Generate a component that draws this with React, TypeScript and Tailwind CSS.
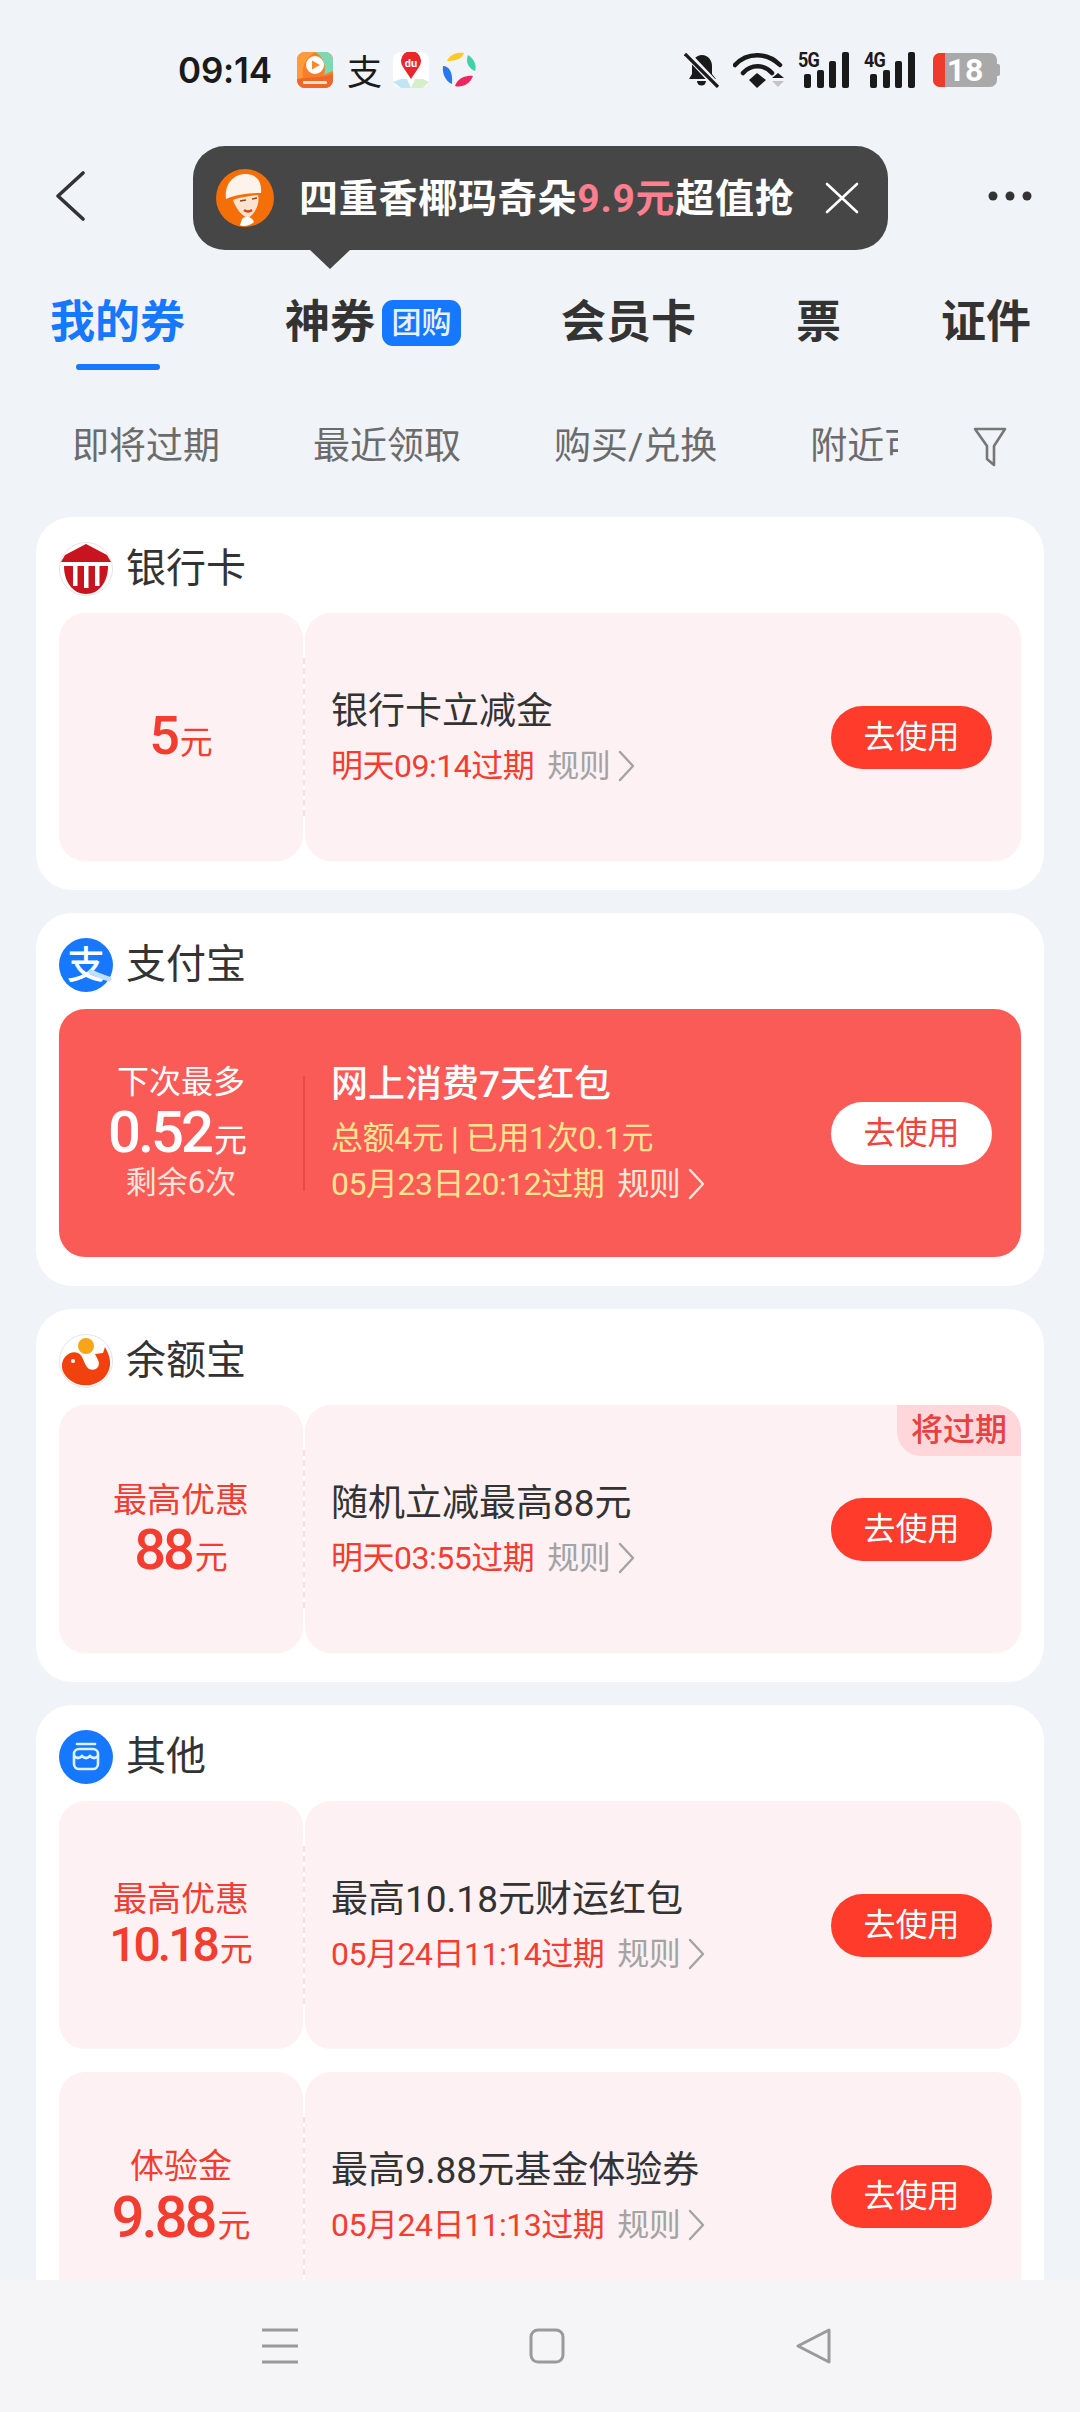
import React from "react";

const Chev = ({ c = "#a3a3a3" }: { c?: string }) => (
  <svg width="18" height="32" viewBox="0 0 18 32" fill="none" stroke={c} strokeWidth="2.4" strokeLinecap="round" strokeLinejoin="round">
    <path d="M2 2 L15 16 L2 30" />
  </svg>
);

const Bars = ({ label }: { label: string }) => (
  <div className="relative w-[52px] h-[36px]">
    <span className="absolute left-0 -top-[3px] text-[20px] leading-[22px] font-bold text-[#1a1a1a] [font-family:Roboto,sans-serif] tracking-[-1px] scale-x-90 origin-left">{label}</span>
    <svg className="absolute left-0 top-0" width="52" height="36" viewBox="0 0 52 36" fill="#1a1a1a">
      <rect x="6" y="22" width="7" height="14" rx="2" />
      <rect x="19" y="18" width="7" height="18" rx="2" />
      <rect x="31" y="9" width="7" height="27" rx="2" />
      <rect x="44" y="0" width="7" height="36" rx="2" />
    </svg>
  </div>
);

const StatusBar = () => (
  <div className="flex items-center h-[36px] mt-[52px] ml-[178px] mr-[80px]">
    <span className="text-[35px] leading-[36px] font-semibold text-[#1a1a1a] [font-family:Inter,sans-serif] w-[95px] whitespace-nowrap tracking-[-0.2px]">09:14</span>
    <svg className="ml-[24px]" width="36" height="36" viewBox="0 0 36 36">
      <rect width="36" height="36" rx="8" fill="#f57f2a" />
      <path d="M0 8 a8 8 0 0 1 8 -8 H18 C8 6 4 16 6 26 L0 28Z" fill="#fb9c3c" />
      <path d="M18 0 H28 a8 8 0 0 1 8 8 V19 C32 20 30 22 27 23 C30 14 26 4 18 0Z" fill="#7ed8b5" />
      <circle cx="18" cy="13" r="9" fill="#fff" />
      <path d="M15 8.5 L23 13 L15 17.5Z" fill="#f58a2e" />
      <path d="M0 27 C12 24 24 27 36 22 V28 a8 8 0 0 1 -8 8 H8 a8 8 0 0 1 -8 -8Z" fill="#f0662a" />
      <rect x="6" y="29" width="24" height="3" rx="1" fill="#ffe2c6" />
    </svg>
    <span className="ml-[14px] w-[35px] text-[35px] leading-[36px] text-[#1a1a1a] [font-family:'Noto_Sans_CJK_SC',sans-serif]">支</span>
    <svg className="ml-[11px]" width="36" height="36" viewBox="0 0 36 36">
      <rect width="36" height="36" rx="8" fill="#fff" />
      <path d="M0 30 L8 27 H14 L18 36 H8 Z" fill="#bfe6f2" />
      <path d="M22 27 H30 L36 30 L30 36 H18Z" fill="#d6efc9" />
      <path d="M18 27 L10 15 A10 10 0 1 1 26 15Z" fill="#e8262d" />
      <text x="18" y="15" fontSize="11" fontWeight="700" fill="#fff" textAnchor="middle" fontFamily="Roboto, sans-serif">du</text>
    </svg>
    <svg className="ml-[13px]" width="34" height="36" viewBox="0 0 34 36">
      <path d="M5 9 C8 2 16 0 22 1 C20 7 14 9 5 9Z" fill="#ffc91f" />
      <path d="M26 3 C32 7 35 13 33 19 C27 17 23 10 26 3Z" fill="#3ed3a7" />
      <path d="M1 14 C7 14 11 20 10 32 C3 29 0 21 1 14Z" fill="#2878f0" />
      <path d="M13 34 C15 27 23 23 31 24 C28 32 20 36 13 34Z" fill="#f0255f" />
    </svg>
    <div className="flex-1" />
    <svg width="36" height="36" viewBox="0 0 36 36" fill="#1a1a1a">
      <path d="M18 3 c6 0 10 5 10 11 v8 l4 5 H5 l3 -5 v-8 c0 -6 4 -11 10 -11Z" />
      <path d="M13 29 h9 a4.5 4.5 0 0 1 -9 0Z" />
      <path d="M2 1 L34 35" stroke="#f0f3f8" strokeWidth="7" />
      <path d="M1 2 L34 35" stroke="#1a1a1a" strokeWidth="3.2" />
    </svg>
    <svg className="ml-[13px]" width="54" height="36" viewBox="0 0 54 36" fill="none">
      <path d="M2 13 C14 0 34 0 47 13" stroke="#1a1a1a" strokeWidth="4.5" strokeLinecap="round" />
      <path d="M10 21 C18 12 31 12 39 21" stroke="#1a1a1a" strokeWidth="4.5" strokeLinecap="round" />
      <path d="M16 28 L24 21 L33 28 L24 36Z" fill="#1a1a1a" />
      <path d="M39 26 L45 21 L51 26Z" fill="#1a1a1a" />
      <path d="M39 29 L51 29 L45 35Z" fill="#c4c4c4" />
    </svg>
    <div className="ml-[11px]"><Bars label="5G" /></div>
    <div className="ml-[14px]"><Bars label="4G" /></div>
    <div className="ml-[17px] relative w-[64px] h-[34px] rounded-[7px] bg-[#a9a9a9] flex items-center justify-center">
      <div className="absolute left-0 top-0 bottom-0 w-[12px] rounded-l-[7px] bg-[#ef3b2c]" />
      <span className="relative text-[32px] leading-[38px] font-bold text-white [font-family:Roboto,sans-serif]">18</span>
    </div>
    <div className="w-[3px] h-[12px] bg-[#a9a9a9] rounded-r-[2px]" />
  </div>
);

const Tooltip = () => (
  <div className="absolute left-[193px] top-[146px] w-[695px] h-[104px] rounded-[32px] bg-[#464646] flex items-center pl-[23px]">
    <svg width="58" height="58" viewBox="0 0 58 58">
      <circle cx="29" cy="29" r="29" fill="#f56f08" />
      <path d="M10 30 C8 14 19 4 31 5 C42 6 46 14 45 24 C36 24 22 25 10 30Z" fill="#fdf3ea" />
      <path d="M17 31 C24 28 34 27 42 26 C44 34 40 44 32 49 C26 47 20 40 17 31Z" fill="#fbe3cf" />
      <path d="M26 50 C30 46 36 48 38 53 C34 57 26 58 24 56Z" fill="#fff" />
      <path d="M28 41 q4 3 8 0" stroke="#d9480f" strokeWidth="2.4" fill="none" />
      <path d="M24 32 l6 -1 M36 30 l5 -1" stroke="#8a4a1c" strokeWidth="1.6" />
    </svg>
    <span className="ml-[25px] mt-[2px] text-[39px] leading-[48px] font-bold text-white tracking-[0.75px] whitespace-nowrap [font-family:Roboto,'Noto_Sans_CJK_SC',sans-serif]">
      四重香椰玛奇朵<span className="text-[#ff7f8f]">9.9元</span>超值抢
    </span>
    <svg className="ml-[30px]" width="34" height="34" viewBox="0 0 34 34" stroke="#fff" strokeWidth="2.6" strokeLinecap="round">
      <path d="M2 3 L32 31 M32 3 L2 31" />
    </svg>
    <div className="absolute left-[117px] top-full w-0 h-0 border-l-[20px] border-r-[20px] border-t-[19px] border-l-transparent border-r-transparent border-t-[#464646]" />
  </div>
);

const Header = () => (
  <div className="flex items-center justify-between h-[49px] mt-[83px] ml-[55px] mr-[48px]">
    <svg width="30" height="50" viewBox="0 0 30 50" fill="none" stroke="#333" strokeWidth="3.6" strokeLinecap="round" strokeLinejoin="round">
      <path d="M28 2 L3 25 L28 48" />
    </svg>
    <svg width="44" height="10" viewBox="0 0 44 10" fill="#333">
      <circle cx="5" cy="5" r="4.5" /><circle cx="22" cy="5" r="4.5" /><circle cx="39" cy="5" r="4.5" />
    </svg>
  </div>
);

const Tabs = () => (
  <div className="flex items-start gap-[100px] mt-[80px] ml-[50px] text-[45px] leading-[46px] font-bold text-[#333] whitespace-nowrap">
    <div className="flex flex-col items-center gap-[18px] text-[#1677ff]">
      <span>我的券</span>
      <div className="w-[84px] h-[6px] rounded-full bg-[#1677ff]" />
    </div>
    <div className="flex items-center gap-[7px]">
      <span>神券</span>
      <span className="w-[79px] h-[46px] rounded-[11px] bg-[#1677ff] flex items-center justify-center text-[30px] leading-[46px] font-medium text-white/90">团购</span>
    </div>
    <span>会员卡</span>
    <span>票</span>
    <span>证件</span>
  </div>
);

const Filters = () => (
  <div className="flex items-center h-[46px] mt-[54px] ml-[72px]">
    <div className="w-[826px] overflow-hidden flex gap-[93px] text-[37px] leading-[46px] text-[#6b6b6b] whitespace-nowrap">
      <span>即将过期</span>
      <span>最近领取</span>
      <span>购买/兑换</span>
      <span>附近可用</span>
    </div>
    <svg className="ml-[75px]" width="34" height="40" viewBox="0 0 34 40" fill="none" stroke="#777" strokeWidth="2.6" strokeLinejoin="round" strokeLinecap="round">
      <path d="M2 2 H32 L21 19 V38 L14 32 V19 Z" />
    </svg>
  </div>
);

type CouponProps = {
  stub: React.ReactNode;
  title: string;
  date: string;
  extra?: string;
  hot?: boolean;
  badge?: boolean;
};

const Coupon = ({ stub, title, date, extra, hot, badge }: CouponProps) => {
  const stubBg = hot ? "" : "bg-[#fef1f3]";
  return (
    <div className={`flex h-[248px] rounded-[26px] ${hot ? "bg-[#fb5b57]" : ""}`}>
      <div className={`w-[244px] rounded-[26px] flex flex-col items-center justify-center ${hot ? "" : "pb-[3px]"} ${stubBg}`}>{stub}</div>
      <div className="w-[2px] flex items-center justify-center">
        <div className={hot ? "h-[115px] border-l-2 border-[#e84a46]" : "h-[158px] border-l-2 border-dashed border-[#fbdde1]"} />
      </div>
      <div className={`relative flex-1 rounded-[26px] flex items-center justify-between pl-[26px] pr-[29px] ${stubBg}`}>
        {badge && (
          <div className="absolute right-0 top-0 w-[124px] h-[51px] rounded-tr-[26px] rounded-bl-[24px] bg-[#ffd6da] flex items-center justify-center text-[32px] leading-[51px] font-medium text-[#e8423f]">
            将过期
          </div>
        )}
        <div className="flex flex-col">
          <div className={`text-[37px] leading-[46px] ${hot ? "text-white font-medium" : "text-[#333]"}`}>{title}</div>
          {extra && <div className="mt-[10px] text-[32px] leading-[40px] tracking-[-0.4px] text-[#ffe58f]">{extra}</div>}
          <div className={`${extra ? "mt-[6px]" : "mt-[11px]"} flex items-center text-[32px] leading-[40px] tracking-[-0.5px] ${hot ? "text-[#ffe58f]" : "text-[#f23d30]"}`}>
            <span>{date}</span>
            <span className={`ml-[13px] ${hot ? "text-[#ffe9d9]" : "text-[#a3a3a3]"}`}>规则</span>
            <span className="ml-[8px]"><Chev c={hot ? "#ffe9d9" : "#a3a3a3"} /></span>
          </div>
        </div>
        <div className={`w-[161px] h-[63px] rounded-full flex items-center justify-center text-[32px] leading-[63px] ${hot ? "bg-white text-[#f0443c]" : "bg-[#ff3b2c] text-white"}`}>
          去使用
        </div>
      </div>
    </div>
  );
};

const Amount = ({ v, size = 56, hot }: { v: string; size?: number; hot?: boolean }) => (
  <div className={`flex items-baseline font-medium ${hot ? "text-white pr-[7px]" : "text-[#f23d30]"}`}>
    <span className="tracking-[-3px]" style={{ fontSize: size, lineHeight: `${size}px` }}>{v}</span>
    <span className="ml-[3px] text-[33px] leading-[40px] font-normal">元</span>
  </div>
);

const Label = ({ t }: { t: string }) => (
  <div className="text-[34px] leading-[44px] text-[#f23d30]">{t}</div>
);

const Card = ({ icon, name, children }: { icon: React.ReactNode; name: string; children: React.ReactNode }) => (
  <div className="bg-white rounded-[36px] mx-[36px] px-[23px] pb-[29px]">
    <div className="h-[96px] flex items-center gap-[13px] pt-[7px]">
      {icon}
      <span className="text-[40px] leading-[50px] text-[#333]">{name}</span>
    </div>
    <div className="flex flex-col gap-[23px]">{children}</div>
  </div>
);

const BankIcon = () => (
  <svg width="54" height="54" viewBox="0 0 54 54">
    <circle cx="27" cy="27" r="26.5" fill="#fff" stroke="#e4e4e4" />
    <path d="M27 2 L48 13 L52 20 H2 L6 13Z" fill="#c8141f" />
    <path d="M5 24 H49 C49 40 40 52 27 52 C14 52 5 40 5 24Z" fill="#c8141f" />
    <rect x="14" y="24" width="4.5" height="20" fill="#fff" />
    <rect x="25" y="24" width="4.5" height="22" fill="#fff" />
    <rect x="36" y="24" width="4.5" height="20" fill="#fff" />
  </svg>
);

const AlipayIcon = () => (
  <div className="relative w-[54px] h-[54px] rounded-full bg-[#1677ff] flex items-center justify-center text-white text-[38px] leading-[54px] font-medium">
    支
    <svg className="absolute left-0 top-0" width="54" height="54" viewBox="0 0 54 54" fill="none">
      <path d="M32 34 C38 37 44 39 50 41" stroke="#bfe0ff" strokeWidth="5" strokeLinecap="round" />
    </svg>
  </div>
);

const YebIcon = () => (
  <svg width="54" height="54" viewBox="0 0 54 54">
    <circle cx="27" cy="27" r="26.5" fill="#fff" stroke="#e4e4e4" />
    <circle cx="27" cy="12" r="8" fill="#f9a51a" />
    <path d="M3 30 C4 22 12 16 19 19 C25 22 24 30 30 35 C37 38 42 32 39 26 L36 20 L44 19 L46 13 C51 22 53 30 49 38 C44 49 30 54 18 50 C8 46 2 38 3 30Z" fill="#f0410f" />
    <circle cx="14" cy="27" r="2" fill="#fff" />
  </svg>
);

const OtherIcon = () => (
  <svg width="54" height="54" viewBox="0 0 54 54" fill="none">
    <circle cx="27" cy="27" r="27" fill="#1677ff" />
    <path d="M18 14 H36" stroke="#dff0ff" strokeWidth="2.6" strokeLinecap="round" />
    <rect x="15" y="19" width="24" height="20" rx="5" stroke="#dff0ff" strokeWidth="2.6" />
    <path d="M15 26 q4 4 8 0 q4 4 8 0 q4 4 8 0" stroke="#dff0ff" strokeWidth="2.6" />
  </svg>
);

const BottomNav = () => (
  <div className="absolute left-0 right-0 bottom-0 h-[132px] bg-[#f5f5f7] flex items-center justify-center gap-[231px] pb-[1px] pl-[14px]">
    <svg width="36" height="36" viewBox="0 0 36 36" stroke="#9a9a9a" strokeWidth="3">
      <path d="M0 2 H36 M0 18 H36 M0 34 H36" />
    </svg>
    <svg width="36" height="36" viewBox="0 0 36 36" fill="none" stroke="#9a9a9a" strokeWidth="3">
      <rect x="2" y="2" width="32" height="32" rx="7" />
    </svg>
    <svg width="36" height="36" viewBox="0 0 36 36" fill="none" stroke="#9a9a9a" strokeWidth="3" strokeLinejoin="round">
      <path d="M33 2 V34 L2 18Z" />
    </svg>
  </div>
);

export default function App() {
  return (
    <div className="relative w-[1080px] h-[2412px] overflow-hidden bg-[#f0f3f8] [font-family:Roboto,'Noto_Sans_CJK_SC',sans-serif]">
      <StatusBar />
      <Header />
      <Tabs />
      <Filters />
      <div className="mt-[47px] flex flex-col gap-[23px]">
        <Card icon={<BankIcon />} name="银行卡">
          <Coupon stub={<Amount v="5" size={54} />} title="银行卡立减金" date="明天09:14过期" />
        </Card>
        <Card icon={<AlipayIcon />} name="支付宝">
          <Coupon
            hot
            stub={
              <>
                <div className="text-[32px] leading-[42px] text-white">下次最多</div>
                <Amount v="0.52" size={58} hot />
                <div className="text-[31px] leading-[44px] text-[#ffe3dc]">剩余6次</div>
              </>
            }
            title="网上消费7天红包"
            extra="总额4元 | 已用1次0.1元"
            date="05月23日20:12过期"
          />
        </Card>
        <Card icon={<YebIcon />} name="余额宝">
          <Coupon
            badge
            stub={<><Label t="最高优惠" /><Amount v="88" /></>}
            title="随机立减最高88元"
            date="明天03:55过期"
          />
        </Card>
        <Card icon={<OtherIcon />} name="其他">
          <Coupon
            stub={<><Label t="最高优惠" /><Amount v="10.18" size={48} /></>}
            title="最高10.18元财运红包"
            date="05月24日11:14过期"
          />
          <Coupon
            stub={<><Label t="体验金" /><Amount v="9.88" size={58} /></>}
            title="最高9.88元基金体验券"
            date="05月24日11:13过期"
          />
        </Card>
      </div>
      <Tooltip />
      <BottomNav />
    </div>
  );
}
